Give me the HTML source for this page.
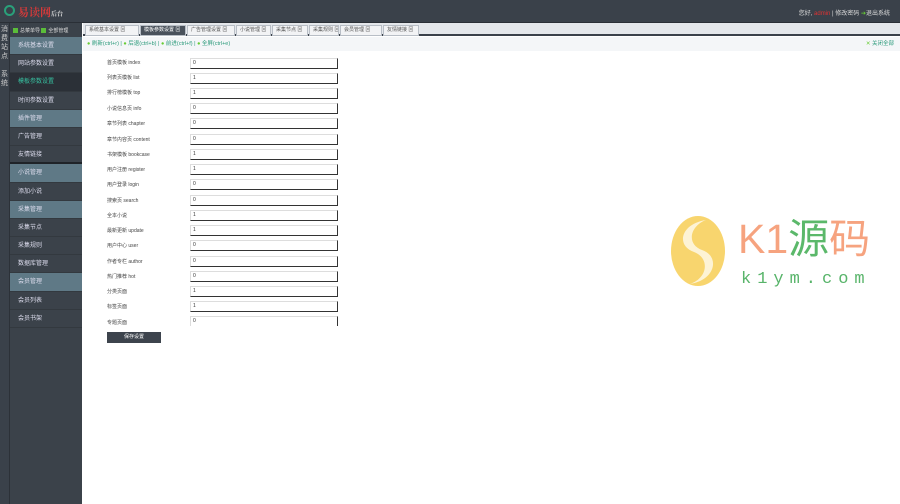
<!DOCTYPE html>
<html><head><meta charset="utf-8"><style>
*{margin:0;padding:0;box-sizing:border-box}
body{width:900px;height:504px;overflow:hidden;background:#fff;font-family:"Liberation Sans","Noto Sans CJK SC",sans-serif;font-size:6px;position:relative}
#hd{position:absolute;left:0;top:0;width:900px;height:23px;background:#3a414a;border-bottom:1px solid #2a2f36}
#logo{position:absolute;left:4px;top:5px;width:11px;height:11px;border:2px solid #2aa07a;border-radius:50%}
#lt{position:absolute;left:18px;top:4px;color:#d23a3a;font-size:11px;font-weight:bold;font-family:"Noto Serif CJK SC",serif}
#ri{position:absolute;right:10px;top:8px;color:#ddd;font-size:6px}
#thin{position:absolute;left:0;top:23px;width:9px;height:481px;background:#3a414a;color:#ccc;font-size:7px;line-height:9px;padding-top:2px;text-align:center}
#sb{position:absolute;left:9px;top:23px;width:73px;height:481px;background:#3b424a;border-left:1px solid #2c3138}
#sbt{height:14px;color:#ddd;padding:4px 0 0 3px;font-size:5px;white-space:nowrap}
#sbt i{display:inline-block;width:5px;height:5px;background:#5bbd3a;margin-right:2px;vertical-align:middle}
.it{height:18.2px;line-height:18px;color:#dde;padding-left:8px;font-size:6px;border-bottom:1px solid #33393f}
.h{background:#5f7986}.s{background:#2b3037;color:#37c0a0}
#tabs{position:absolute;left:83px;top:23px;width:817px;height:13px;background:#e4e7eb;border-bottom:2px solid #3a414a}
.tab{position:absolute;top:2px;height:11px;background:#f2f3f5;border:1px solid #b8bec6;color:#555;font-size:5px;line-height:9px;padding-left:3px;white-space:nowrap;overflow:hidden}
.tab.a{background:#4a525c;color:#fff}
#tb{position:absolute;left:83px;top:37px;width:817px;height:14px;background:#f4f6f8;color:#2a9a7a;font-size:5.5px;line-height:14px;padding-left:4px}
.lb{position:absolute;left:107px;color:#444;font-size:5px}
.in{position:absolute;left:190px;width:148px;height:11px;border:1px solid #ddd;border-right:1.5px solid #333;border-bottom:1.5px solid #333;font-size:5px;color:#333;padding-left:2px;line-height:9px}
#btn{position:absolute;left:107px;top:332px;width:54px;height:11px;background:#3d444d;color:#fff;font-size:5px;text-align:center;line-height:11px}
</style></head><body>
<div id="hd"><div id="logo"></div><div id="lt">易读网<span style="font-size:6px;color:#ddd">后台</span></div>
<div id="ri">您好, <span style="color:#d33">admin</span> | 修改密码 <span style="color:#6c3">➔</span>退出系统</div></div>
<div id="thin">消<br>费<br>站<br>点<br><br>系<br>统</div>
<div id="sb"><div id="sbt"><i></i>总菜单导 <i></i>全部管理</div>
<div class="it h">系统基本设置</div><div class="it">网站参数设置</div><div class="it s">模板参数设置</div><div class="it">时间参数设置</div><div class="it h">插件管理</div><div class="it">广告管理</div><div class="it" style="border-bottom:2px solid #1f2328">友情链接</div><div class="it h">小说管理</div><div class="it">添加小说</div><div class="it h">采集管理</div><div class="it">采集节点</div><div class="it">采集规则</div><div class="it">数据库管理</div><div class="it h">会员管理</div><div class="it">会员列表</div><div class="it">会员书架</div></div>
<div id="tabs">
<div class="tab" style="left:2px;width:54px">系统基本设置 ⊠</div>
<div class="tab a" style="left:57px;width:46px">模板参数设置 ⊠</div>
<div class="tab" style="left:104px;width:48px">广告管理设置 ⊠</div>
<div class="tab" style="left:153px;width:35px">小说管理 ⊠</div>
<div class="tab" style="left:189px;width:36px">采集节点 ⊠</div>
<div class="tab" style="left:226px;width:30px">采集规则 ⊠</div>
<div class="tab" style="left:257px;width:42px">会员管理 ⊠</div>
<div class="tab" style="left:300px;width:36px">友情链接 ⊠</div></div>
<div id="tb"><span style="color:#6c3">●</span> 刷新(ctrl+r) | <span style="color:#6c3">●</span> 后退(ctrl+b) | <span style="color:#6c3">●</span> 前进(ctrl+f) | <span style="color:#6c3">●</span> 全屏(ctrl+e)<span style="position:absolute;right:6px"><span style="color:#6c3">✕</span> 关闭全部</span></div>
<div class="lb" style="top:59px">首页模板 index</div><div class="in" style="top:58px">0</div>
<div class="lb" style="top:74px">列表页模板 list</div><div class="in" style="top:73px">1</div>
<div class="lb" style="top:89px">排行榜模板 top</div><div class="in" style="top:88px">1</div>
<div class="lb" style="top:105px">小说信息页 info</div><div class="in" style="top:103px">0</div>
<div class="lb" style="top:120px">章节列表 chapter</div><div class="in" style="top:118px">0</div>
<div class="lb" style="top:136px">章节内容页 content</div><div class="in" style="top:134px">0</div>
<div class="lb" style="top:151px">书架模板 bookcase</div><div class="in" style="top:149px">1</div>
<div class="lb" style="top:166px">用户注册 register</div><div class="in" style="top:164px">1</div>
<div class="lb" style="top:181px">用户登录 login</div><div class="in" style="top:179px">0</div>
<div class="lb" style="top:197px">搜索页 search</div><div class="in" style="top:195px">0</div>
<div class="lb" style="top:212px">全本小说</div><div class="in" style="top:210px">1</div>
<div class="lb" style="top:227px">最新更新 update</div><div class="in" style="top:225px">1</div>
<div class="lb" style="top:242px">用户中心 user</div><div class="in" style="top:240px">0</div>
<div class="lb" style="top:258px">作者专栏 author</div><div class="in" style="top:256px">0</div>
<div class="lb" style="top:273px">热门推荐 hot</div><div class="in" style="top:271px">0</div>
<div class="lb" style="top:288px">分类页面</div><div class="in" style="top:286px">1</div>
<div class="lb" style="top:303px">标签页面</div><div class="in" style="top:301px">1</div>
<div class="lb" style="top:319px">专题页面</div><div class="in" style="top:316px;height:10px;border-bottom:none">0</div>
<div id="btn">保存设置</div>
<svg style="position:absolute;left:668px;top:212px" width="60" height="78" viewBox="0 0 60 78">
<ellipse cx="30" cy="39" rx="27" ry="35" fill="#f8d56e"/>
<path d="M38 8 C12 12 8 34 26 40 C42 46 40 66 22 72 C48 68 52 44 34 38 C18 32 22 14 38 8Z" fill="#fdf6e0" opacity=".9"/>
</svg>
<div style="position:absolute;left:738px;top:214px;font-size:41px;line-height:50px;color:#f6a37f;font-family:'Liberation Sans','Noto Sans CJK SC',sans-serif;white-space:nowrap">K1<span style="color:#5bb86a">源</span>码</div>
<div style="position:absolute;left:741px;top:270px;font-size:17px;letter-spacing:6px;color:#58b46a;font-family:'Liberation Mono',monospace">k1ym.com</div>
</body></html>
